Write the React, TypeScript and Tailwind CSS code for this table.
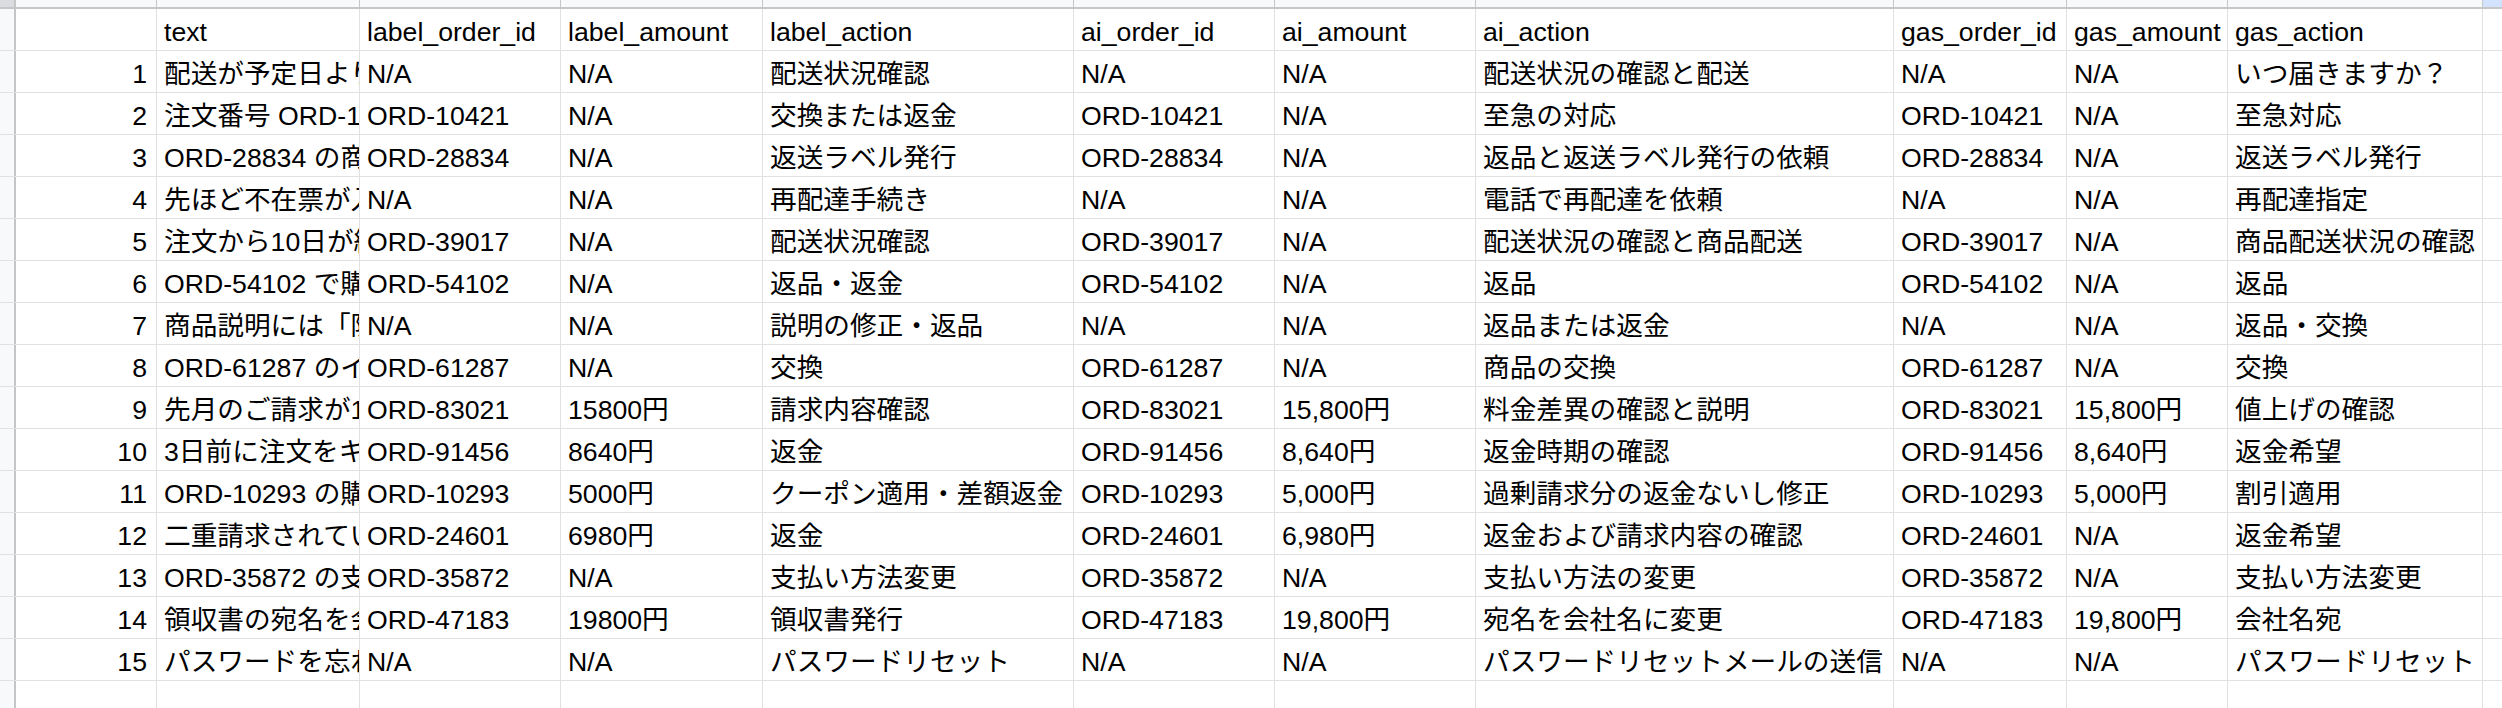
import React from 'react';

type Row = string[];

const columns = [
  { key: 'num', width: 'w-[141px]', align: 'right' },
  { key: 'text', width: 'w-[203px]', align: 'left' },
  { key: 'label_order_id', width: 'w-[201px]', align: 'left' },
  { key: 'label_amount', width: 'w-[202px]', align: 'left' },
  { key: 'label_action', width: 'w-[311px]', align: 'left' },
  { key: 'ai_order_id', width: 'w-[201px]', align: 'left' },
  { key: 'ai_amount', width: 'w-[201px]', align: 'left' },
  { key: 'ai_action', width: 'w-[418px]', align: 'left' },
  { key: 'gas_order_id', width: 'w-[173px]', align: 'left' },
  { key: 'gas_amount', width: 'w-[161px]', align: 'left' },
  { key: 'gas_action', width: 'w-[255px]', align: 'left' },
];

const header: Row = ['', 'text', 'label_order_id', 'label_amount', 'label_action', 'ai_order_id', 'ai_amount', 'ai_action', 'gas_order_id', 'gas_amount', 'gas_action'];

const rows: Row[] = [
  ['1', '配送が予定日より遅れています。いつ届きますか？', 'N/A', 'N/A', '配送状況確認', 'N/A', 'N/A', '配送状況の確認と配送', 'N/A', 'N/A', 'いつ届きますか？'],
  ['2', '注文番号 ORD-10421 の商品が壊れていました', 'ORD-10421', 'N/A', '交換または返金', 'ORD-10421', 'N/A', '至急の対応', 'ORD-10421', 'N/A', '至急対応'],
  ['3', 'ORD-28834 の商品を返品したいです', 'ORD-28834', 'N/A', '返送ラベル発行', 'ORD-28834', 'N/A', '返品と返送ラベル発行の依頼', 'ORD-28834', 'N/A', '返送ラベル発行'],
  ['4', '先ほど不在票が入っていました', 'N/A', 'N/A', '再配達手続き', 'N/A', 'N/A', '電話で再配達を依頼', 'N/A', 'N/A', '再配達指定'],
  ['5', '注文から10日が経ちましたが届きません', 'ORD-39017', 'N/A', '配送状況確認', 'ORD-39017', 'N/A', '配送状況の確認と商品配送', 'ORD-39017', 'N/A', '商品配送状況の確認'],
  ['6', 'ORD-54102 で購入した商品を返品したい', 'ORD-54102', 'N/A', '返品・返金', 'ORD-54102', 'N/A', '返品', 'ORD-54102', 'N/A', '返品'],
  ['7', '商品説明には「防水」とありましたが', 'N/A', 'N/A', '説明の修正・返品', 'N/A', 'N/A', '返品または返金', 'N/A', 'N/A', '返品・交換'],
  ['8', 'ORD-61287 のイヤホンのサイズが違います', 'ORD-61287', 'N/A', '交換', 'ORD-61287', 'N/A', '商品の交換', 'ORD-61287', 'N/A', '交換'],
  ['9', '先月のご請求が15800円になっていました', 'ORD-83021', '15800円', '請求内容確認', 'ORD-83021', '15,800円', '料金差異の確認と説明', 'ORD-83021', '15,800円', '値上げの確認'],
  ['10', '3日前に注文をキャンセルしました', 'ORD-91456', '8640円', '返金', 'ORD-91456', '8,640円', '返金時期の確認', 'ORD-91456', '8,640円', '返金希望'],
  ['11', 'ORD-10293 の購入時にクーポンが', 'ORD-10293', '5000円', 'クーポン適用・差額返金', 'ORD-10293', '5,000円', '過剰請求分の返金ないし修正', 'ORD-10293', '5,000円', '割引適用'],
  ['12', '二重請求されているようです', 'ORD-24601', '6980円', '返金', 'ORD-24601', '6,980円', '返金および請求内容の確認', 'ORD-24601', 'N/A', '返金希望'],
  ['13', 'ORD-35872 の支払い方法を変更したい', 'ORD-35872', 'N/A', '支払い方法変更', 'ORD-35872', 'N/A', '支払い方法の変更', 'ORD-35872', 'N/A', '支払い方法変更'],
  ['14', '領収書の宛名を会社名にしてほしい', 'ORD-47183', '19800円', '領収書発行', 'ORD-47183', '19,800円', '宛名を会社名に変更', 'ORD-47183', '19,800円', '会社名宛'],
  ['15', 'パスワードを忘れてログインできません', 'N/A', 'N/A', 'パスワードリセット', 'N/A', 'N/A', 'パスワードリセットメールの送信', 'N/A', 'N/A', 'パスワードリセット'],
];

const SheetRow: React.FC<{ cells: Row }> = ({ cells }) => (
  <div className="flex h-[42px] border-b border-[#e1e1e1]">
    <div className="w-[16px] shrink-0 bg-[#f8f9fa] border-r-2 border-[#c4c7c5]" />
    {columns.map((col, i) => (
      <div
        key={col.key}
        className={`${col.width} shrink-0 border-r border-[#e1e1e1] overflow-hidden whitespace-nowrap pt-[7px] leading-[32px] ${
          col.align === 'right' ? 'text-right pr-[9px]' : 'text-left pl-[7px]'
        }`}
      >
        {cells[i]}
      </div>
    ))}
    <div className="flex-1" />
  </div>
);

export default function App() {
  return (
    <div className="w-[2502px] h-[708px] overflow-hidden bg-white text-black text-[26.67px] font-['Liberation_Sans','Noto_Sans_CJK_JP',sans-serif]">
      {/* column header strip, scrolled mostly out of view */}
      <div className="flex h-[9px] border-b-2 border-[#c4c7c5] bg-[#f8f9fa]">
        <div className="w-[16px] shrink-0 bg-[#dadce0] border-r-2 border-[#c4c7c5]" />
        {columns.map(col => (
          <div key={col.key} className={`${col.width} shrink-0 border-r border-[#c4c7c5]`} />
        ))}
        <div className="flex-1 bg-[#d3e3fd]" />
      </div>
      <SheetRow cells={header} />
      {rows.map(r => (
        <SheetRow key={r[0]} cells={r} />
      ))}
      <SheetRow cells={header.map(() => '')} />
    </div>
  );
}
